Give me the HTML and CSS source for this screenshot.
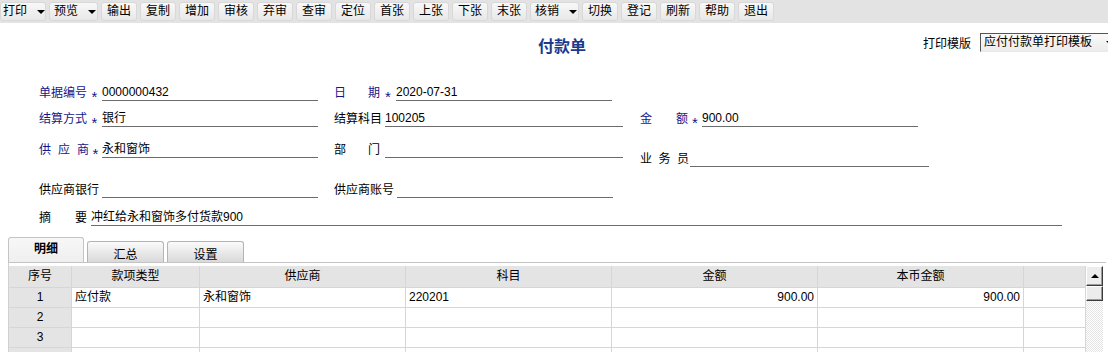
FILE: index.html
```html
<!DOCTYPE html>
<html lang="zh-CN">
<head>
    <meta charset="UTF-8">
    <meta name="viewport" content="width=device-width, initial-scale=1.0">
    <title>付款单</title>
    <link rel="stylesheet" href="styles.css">
</head>
<body>

    <!-- 工具栏 -->
    <div class="toolbar">
        <button class="tb-btn drop">打印<i class="arrow"></i></button>
        <button class="tb-btn drop">预览<i class="arrow"></i></button>
        <button class="tb-btn">输出</button>
        <button class="tb-btn">复制</button>
        <button class="tb-btn">增加</button>
        <button class="tb-btn">审核</button>
        <button class="tb-btn">弃审</button>
        <button class="tb-btn">查审</button>
        <button class="tb-btn">定位</button>
        <button class="tb-btn">首张</button>
        <button class="tb-btn">上张</button>
        <button class="tb-btn">下张</button>
        <button class="tb-btn">末张</button>
        <button class="tb-btn drop">核销<i class="arrow"></i></button>
        <button class="tb-btn">切换</button>
        <button class="tb-btn">登记</button>
        <button class="tb-btn">刷新</button>
        <button class="tb-btn">帮助</button>
        <button class="tb-btn">退出</button>
    </div>

    <!-- 标题 -->
    <div class="head">
        <div class="title">付款单</div>
        <div class="tpl">
            <span>打印模版</span>
            <div class="tpl-select">应付付款单打印模板<i class="arrow"></i></div>
        </div>
    </div>

    <!-- 表头 -->
    <div class="form">
        <div class="row r1">
            <div class="field">
                <span class="lbl blue w48">单据编号</span><span class="star w15">*</span><span class="val w216">0000000432</span>
            </div>
            <div class="field">
                <span class="lbl blue w46 spread"><span>日</span><span>期</span></span><span class="star w16">*</span><span class="val w216">2020-07-31</span>
            </div>
            <div class="field"></div>
        </div>

        <div class="row r2">
            <div class="field">
                <span class="lbl blue w48">结算方式</span><span class="star w15">*</span><span class="val w216">银行</span>
            </div>
            <div class="field">
                <span class="lbl w48">结算科目</span><span class="val w238 ml3">100205</span>
            </div>
            <div class="field">
                <span class="lbl blue w48 spread"><span>金</span><span>额</span></span><span class="star w14">*</span><span class="val w216">900.00</span>
            </div>
        </div>

        <div class="row r3">
            <div class="field">
                <span class="lbl blue w50 spread"><span>供</span><span>应</span><span>商</span></span><span class="star w13">*</span><span class="val w216">永和窗饰</span>
            </div>
            <div class="field">
                <span class="lbl w46 spread"><span>部</span><span>门</span></span><span class="val w238 ml5"></span>
            </div>
            <div class="field low">
                <span class="lbl w49 spread"><span>业</span><span>务</span><span>员</span></span><span class="val w239 ml1"></span>
            </div>
        </div>

        <div class="row r4">
            <div class="field">
                <span class="lbl w60">供应商银行</span><span class="val w216 ml3"></span>
            </div>
            <div class="field">
                <span class="lbl w60">供应商账号</span><span class="val w216 ml3"></span>
            </div>
            <div class="field"></div>
        </div>

        <div class="row r5">
            <div class="field full">
                <span class="lbl w48 spread"><span>摘</span><span>要</span></span><span class="val w971 ml4">冲红给永和窗饰多付货款900</span>
            </div>
        </div>
    </div>

    <!-- 页签 -->
    <div class="tabs">
        <div class="tab active">明细</div>
        <div class="tab">汇总</div>
        <div class="tab">设置</div>
    </div>

    <!-- 表体 -->
    <div class="grid-wrap">
        <div class="grid">
            <div class="c h">序号</div>
            <div class="c h">款项类型</div>
            <div class="c h">供应商</div>
            <div class="c h">科目</div>
            <div class="c h">金额</div>
            <div class="c h">本币金额</div>
            <div class="c h"></div>

            <div class="c n">1</div>
            <div class="c">应付款</div>
            <div class="c">永和窗饰</div>
            <div class="c">220201</div>
            <div class="c r">900.00</div>
            <div class="c r">900.00</div>
            <div class="c"></div>

            <div class="c n">2</div>
            <div class="c"></div>
            <div class="c"></div>
            <div class="c"></div>
            <div class="c"></div>
            <div class="c"></div>
            <div class="c"></div>

            <div class="c n">3</div>
            <div class="c"></div>
            <div class="c"></div>
            <div class="c"></div>
            <div class="c"></div>
            <div class="c"></div>
            <div class="c"></div>

            <div class="c n"></div>
            <div class="c"></div>
            <div class="c"></div>
            <div class="c"></div>
            <div class="c"></div>
            <div class="c"></div>
            <div class="c"></div>
        </div>
        <div class="vscroll">
            <div class="sb-btn"><i class="up"></i></div>
            <div class="sb-thumb"></div>
        </div>
    </div>

</body>
</html>
```

FILE: styles.css
```css
/* Grundlayout */
body {
    margin: 0;
    width: 1108px;
    height: 352px;
    overflow: hidden;
    background: #fff;
    color: #000;
    font-family: "Liberation Sans", "Noto Sans CJK SC", sans-serif;
    font-size: 12px;
}

/* Toolbar */
.toolbar {
    display: flex;
    gap: 3px;
    height: 23px;
    padding-top: 2px;
    box-sizing: border-box;
    background: #e3e3e3;
}

.tb-btn {
    width: 36px;
    height: 19px;
    padding: 0;
    border: 1px solid #d8d8d8;
    border-radius: 3px;
    background: linear-gradient(#f8f8f8, #e8e8e8);
    font: inherit;
    color: #000;
    line-height: 17px;
    display: flex;
    align-items: center;
    justify-content: center;
    flex-shrink: 0;
}

.tb-btn.drop {
    width: 49px;
    justify-content: flex-start;
    padding-left: 4px;
}

.tb-btn:first-child {
    width: 46px;
    padding-left: 2px;
}

.arrow {
    display: inline-block;
    width: 0;
    height: 0;
    border-left: 4px solid transparent;
    border-right: 4px solid transparent;
    border-top: 4px solid #000;
    margin-left: 10px;
}

/* Kopfbereich */
.head {
    display: flex;
    align-items: flex-start;
    height: 63px;
    white-space: nowrap;
}

.title {
    flex-shrink: 0;
    margin-left: 538px;
    margin-top: 12px;
    font-size: 16px;
    line-height: 20px;
    font-weight: bold;
    color: #1b3a8c;
    font-family: "Noto Sans CJK SC", sans-serif;
}

.tpl {
    flex-shrink: 0;
    margin-left: 337px;
    margin-top: 10px;
    display: flex;
    align-items: center;
}

.tpl-select {
    margin-left: 9px;
    width: 140px;
    height: 17px;
    line-height: 17px;
    padding-left: 3px;
    border: 1px solid;
    border-color: #555 #e8e8e8 #e8e8e8 #555;
    background: linear-gradient(#fafafa, #ececec);
    display: flex;
    align-items: center;
}

.tpl-select .arrow {
    margin-left: 14px;
}

/* Formular */
.form {
    padding-left: 39px;
}

.row {
    display: grid;
    grid-template-columns: 295px 306px 1fr;
    align-items: end;
    height: 15px;
}

.r1 { margin-top: 0; }
.r2 { margin-top: 11px; }
.r3 { margin-top: 16px; }
.r4 { margin-top: 25px; }
.r5 { margin-top: 13px; }

.field {
    display: flex;
    align-items: flex-end;
    height: 15px;
}

.field.full {
    grid-column: 1 / -1;
}

.field.low {
    align-self: end;
    margin-bottom: -9px;
}

.lbl {
    line-height: 14px;
    padding-bottom: 1px;
    white-space: nowrap;
}

.lbl.spread {
    display: flex;
    justify-content: space-between;
}

.blue {
    color: #16168a;
}

.star {
    color: #16168a;
    line-height: 14px;
    text-align: center;
    font-size: 15px;
    position: relative;
    top: 3px;
}

.val {
    display: block;
    height: 13px;
    line-height: 13px;
    padding-bottom: 1px;
    border-bottom: 1px solid #6c6c6c;
    white-space: nowrap;
}

.w13 { width: 13px; }
.w14 { width: 14px; }
.w15 { width: 15px; }
.w16 { width: 16px; }
.w46 { width: 46px; }
.w48 { width: 48px; }
.w49 { width: 49px; }
.w50 { width: 50px; }
.w60 { width: 60px; }
.w216 { width: 216px; }
.w238 { width: 238px; }
.w239 { width: 239px; }
.w971 { width: 971px; }
.ml1 { margin-left: 1px; }
.ml3 { margin-left: 3px; }
.ml4 { margin-left: 4px; }
.ml5 { margin-left: 5px; }

/* Tabs */
.tabs {
    display: flex;
    align-items: flex-end;
    margin-top: 11px;
    padding-left: 8px;
    height: 25px;
}

.tab {
    width: 77px;
    height: 21px;
    margin-right: 3px;
    box-sizing: border-box;
    border: 1px solid #b4b4b4;
    border-bottom: none;
    border-radius: 3px 3px 0 0;
    background: linear-gradient(#fbfbfb, #d9d9d9);
    text-align: center;
    line-height: 26px;
    overflow: hidden;
}

.tab.active {
    height: 25px;
    width: 76px;
    background: linear-gradient(#f7f7f7, #efefef);
    border-color: #c4c4c4;
    font-weight: bold;
    line-height: 22px;
}

/* Tabelle */
.grid-wrap {
    display: flex;
    margin-left: 8px;
    width: 1097px;
    border-top: 1px solid #c4c4c4;
    border-left: 1px solid #d0d0d0;
    padding-top: 3px;
}

.grid {
    display: grid;
    grid-template-columns: 63px 128px 206px 206px 206px 206px 62px;
    width: 1077px;
    align-content: start;
}

.c {
    height: 19px;
    line-height: 19px;
    padding: 0 3px;
    border-right: 1px solid #d6d6d6;
    border-bottom: 1px solid #d6d6d6;
    white-space: nowrap;
    overflow: hidden;
}

.c.h {
    height: 21px;
    line-height: 21px;
    background: #e4e4e4;
    text-align: center;
}

.c.n {
    background: #e4e4e4;
    text-align: center;
}

.c.r {
    text-align: right;
}

.vscroll {
    width: 17px;
    height: 90px;
    display: flex;
    flex-direction: column;
    background: repeating-conic-gradient(#fff 0 25%, #e4e4e4 0 50%) 0 0 / 2px 2px;
}

.sb-btn,
.sb-thumb {
    box-sizing: border-box;
    border: 1px solid;
    border-color: #fff #3c3c3c #3c3c3c #fff;
    background: #ececec;
    box-shadow: inset -1px -1px 0 #9a9a9a;
}

.sb-btn {
    height: 20px;
    display: flex;
    align-items: center;
    justify-content: center;
}

.sb-thumb {
    height: 15px;
}

.up {
    width: 0;
    height: 0;
    border-left: 4px solid transparent;
    border-right: 4px solid transparent;
    border-bottom: 4px solid #000;
}
```
